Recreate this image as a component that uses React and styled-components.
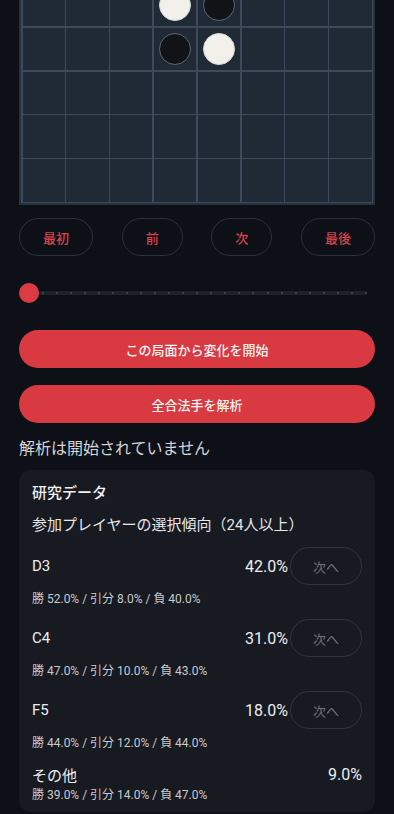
import React from "react";
import styled, { createGlobalStyle } from "styled-components";

const Global = createGlobalStyle`
  html, body { margin: 0; padding: 0; background: #0d1016; }
  body { font-family: Roboto, "Noto Sans CJK JP", sans-serif; color: #e6e7ea; overflow: hidden; }
  * { box-sizing: border-box; }
`;

const Page = styled.div`
  width: 394px;
  height: 814px;
  overflow: hidden;
  padding: 0 19px;
  display: flex;
  flex-direction: column;
`;

const Board = styled.div`
  margin-top: -151px;
  background: #28323f;
  padding: 2px;
`;

const Grid = styled.div`
  display: grid;
  grid-template-columns: repeat(8, 1fr);
  gap: 1.5px;
  padding: 1.5px;
  background: #3e4a5a;
`;

const Cell = styled.div`
  aspect-ratio: 1 / 1;
  background: #1f2a36;
  display: flex;
  align-items: center;
  justify-content: center;
`;

const Stone = styled.div`
  width: 32px;
  height: 32px;
  border-radius: 50%;
  background: ${(p) => (p.$white ? "#f1f0ea" : "#111317")};
  border: 1px solid ${(p) => (p.$white ? "#d8d7d0" : "#5d6673")};
`;

const NavRow = styled.div`
  margin-top: 13px;
  display: flex;
  justify-content: space-between;
`;

const NavButton = styled.button`
  height: 38px;
  padding: 0 23px;
  border-radius: 19px;
  border: 1px solid #2c3038;
  background: transparent;
  color: #d9424a;
  font-family: Roboto, "Noto Sans CJK JP", sans-serif;
  font-size: 13px;
  font-weight: 500;
`;

const Slider = styled.div`
  margin-top: 27px;
  height: 20px;
  position: relative;
  display: flex;
  align-items: center;
`;

const Track = styled.div`
  position: absolute;
  left: 10px;
  right: 8px;
  height: 4px;
  border-radius: 2px;
  background: #1d2129;
  display: flex;
  align-items: center;
  justify-content: space-between;
  padding: 0 0 0 13px;
`;

const Dot = styled.span`
  width: 2px;
  height: 2px;
  border-radius: 1px;
  background: #4a505b;
`;

const Thumb = styled.div`
  position: relative;
  width: 20px;
  height: 20px;
  border-radius: 50%;
  background: #dc3b44;
`;

const PrimaryButton = styled.button`
  height: 38px;
  width: 100%;
  border: none;
  border-radius: 19px;
  background: #d93a42;
  color: #f4f4f4;
  font-family: Roboto, "Noto Sans CJK JP", sans-serif;
  font-size: 13px;
  font-weight: 500;
  margin-top: ${(p) => p.$mt}px;
`;

const Status = styled.div`
  margin-top: 14px;
  font-size: 16px;
  line-height: 24px;
  color: #d4d5d8;
`;

const Card = styled.div`
  margin-top: 9px;
  background: #171a21;
  border-radius: 12px;
  padding: 12px 13px 9px 13px;
  display: flex;
  flex-direction: column;
`;

const CardTitle = styled.div`
  font-size: 15px;
  line-height: 22px;
  font-weight: 500;
  color: #f0f0f2;
`;

const CardSub = styled.div`
  margin-top: 10px;
  font-size: 15px;
  line-height: 22px;
  color: #e4e5e8;
`;

const List = styled.div`
  margin-top: 11px;
  display: flex;
  flex-direction: column;
  gap: 12px;
`;

const Item = styled.div`
  display: flex;
  flex-direction: column;
  gap: ${(p) => (p.$plain ? 2 : 6)}px;
`;

const ItemRow = styled.div`
  display: flex;
  align-items: center;
  min-height: ${(p) => (p.$plain ? 22 : 38)}px;
`;

const Move = styled.div`
  flex: 1;
  font-size: 15px;
  color: #eceef1;
`;

const Pct = styled.div`
  font-size: 16px;
  color: #eceef1;
  margin-right: ${(p) => (p.$plain ? 0 : 2)}px;
`;

const NextButton = styled.button`
  width: 72px;
  height: 38px;
  border-radius: 19px;
  border: 1px solid #30343c;
  background: transparent;
  color: #6f737c;
  font-family: Roboto, "Noto Sans CJK JP", sans-serif;
  font-size: 13px;
`;

const Stats = styled.div`
  font-size: 12px;
  line-height: 16px;
  color: #c9cacd;
`;

const stones = { 27: true, 28: false, 35: false, 36: true };

const data = [
  { move: "D3", pct: "42.0%", stats: "勝 52.0% / 引分 8.0% / 負 40.0%" },
  { move: "C4", pct: "31.0%", stats: "勝 47.0% / 引分 10.0% / 負 43.0%" },
  { move: "F5", pct: "18.0%", stats: "勝 44.0% / 引分 12.0% / 負 44.0%" },
  { move: "その他", pct: "9.0%", stats: "勝 39.0% / 引分 14.0% / 負 47.0%", plain: true },
];

export default function App() {
  return (
    <>
      <Global />
      <Page>
        <Board>
          <Grid>
            {Array.from({ length: 64 }, (_, i) => (
              <Cell key={i}>
                {i in stones && <Stone $white={stones[i]} />}
              </Cell>
            ))}
          </Grid>
        </Board>
        <NavRow>
          <NavButton>最初</NavButton>
          <NavButton>前</NavButton>
          <NavButton>次</NavButton>
          <NavButton>最後</NavButton>
        </NavRow>
        <Slider>
          <Track>
            {Array.from({ length: 24 }, (_, i) => (
              <Dot key={i} />
            ))}
          </Track>
          <Thumb />
        </Slider>
        <PrimaryButton $mt={27}>この局面から変化を開始</PrimaryButton>
        <PrimaryButton $mt={17}>全合法手を解析</PrimaryButton>
        <Status>解析は開始されていません</Status>
        <Card>
          <CardTitle>研究データ</CardTitle>
          <CardSub>参加プレイヤーの選択傾向（24人以上）</CardSub>
          <List>
            {data.map((d) => (
              <Item key={d.move} $plain={d.plain}>
                <ItemRow $plain={d.plain}>
                  <Move>{d.move}</Move>
                  <Pct $plain={d.plain}>{d.pct}</Pct>
                  {!d.plain && <NextButton>次へ</NextButton>}
                </ItemRow>
                <Stats>{d.stats}</Stats>
              </Item>
            ))}
          </List>
        </Card>
      </Page>
    </>
  );
}
